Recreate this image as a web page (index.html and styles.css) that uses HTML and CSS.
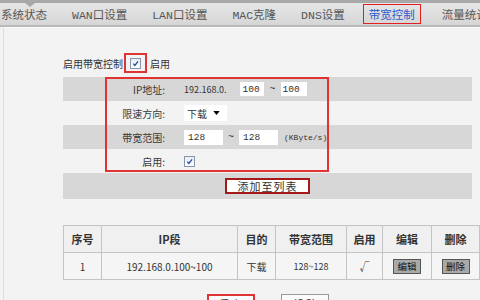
FILE: index.html
```html
<!DOCTYPE html>
<html lang="zh-CN">
<head>
    <meta charset="UTF-8">
    <title>带宽控制</title>
    <link rel="stylesheet" href="styles.css">
</head>
<body>
    <!-- Top Menu -->
    <div class="nav">
        <span class="nav-item first">系统状态</span>
        <span class="nav-item">WAN口设置</span>
        <span class="nav-item">LAN口设置</span>
        <span class="nav-item">MAC克隆</span>
        <span class="nav-item">DNS设置</span>
        <span class="nav-item active">带宽控制</span>
        <span class="nav-item">流量统计</span>
    </div>

    <div class="main">
        <!-- Enable switch -->
        <div class="enable-line">
            <span>启用带宽控制</span>
            <span class="mark-box"><span class="cb"><svg viewBox="0 0 10 10"><path d="M2.5 5.2 L4.3 7.2 L7.8 2.6" /></svg></span></span>
            <span>启用</span>
        </div>

        <!-- Rule form -->
        <div class="form">
            <div class="row gray">
                <span class="label">IP地址:</span>
                <span class="value">
                    <span class="ip-prefix">192.168.0.</span>
                    <input class="box ip-a" type="text" value="100">
                    <span class="tilde">~</span>
                    <input class="box ip-b" type="text" value="100">
                </span>
            </div>
            <div class="row">
                <span class="label">限速方向:</span>
                <span class="value">
                    <span class="select">下载<svg viewBox="0 0 8 5"><path d="M0 0 H8 L4 5 Z" /></svg></span>
                </span>
            </div>
            <div class="row gray">
                <span class="label">带宽范围:</span>
                <span class="value">
                    <input class="box bw" type="text" value="128">
                    <span class="tilde">~</span>
                    <input class="box bw" type="text" value="128">
                    <span class="unit">(KByte/s)</span>
                </span>
            </div>
            <div class="row">
                <span class="label">启用:</span>
                <span class="value">
                    <span class="cb"><svg viewBox="0 0 10 10"><path d="M2.5 5.2 L4.3 7.2 L7.8 2.6" /></svg></span>
                </span>
            </div>
            <div class="row gray add-row">
                <button class="add-btn">添加至列表</button>
            </div>
            <!-- highlight frame -->
            <div class="mark-frame"></div>
        </div>

        <!-- Rule list -->
        <table class="rules">
            <tr>
                <th class="c1">序号</th>
                <th class="c2">IP段</th>
                <th class="c3">目的</th>
                <th class="c4">带宽范围</th>
                <th class="c5">启用</th>
                <th class="c6">编辑</th>
                <th class="c7">删除</th>
            </tr>
            <tr>
                <td>1</td>
                <td>192.168.0.100~100</td>
                <td>下载</td>
                <td class="small">128~128</td>
                <td>√</td>
                <td><span class="mini-btn">编辑</span></td>
                <td><span class="mini-btn">删除</span></td>
            </tr>
        </table>

        <div class="actions">
            <button class="btn save">保 存</button>
            <button class="btn">帮 助</button>
        </div>
    </div>
</body>
</html>
```

FILE: styles.css
```css
/* General */
body {
    margin: 0;
    width: 480px;
    height: 300px;
    overflow: hidden;
    font-family: "Noto Sans CJK SC", sans-serif;
    font-size: 10px;
    color: #333;
    background: #f3f3f3;
}

/* Top Menu */
.nav {
    position: relative;
    display: flex;
    align-items: center;
    gap: 25px;
    height: 22px;
    border-top: 3px solid #a8a8a8;
    border-bottom: 2px solid #b9b9b9;
    background: linear-gradient(#e6e6e6, #d6d6d6);
    font-family: "Liberation Mono", "Noto Sans CJK SC", monospace;
    font-size: 11.5px;
    color: #555;
    white-space: nowrap;
}

.nav-item.first {
    margin-left: 1px;
}

.nav-item.first::before {
    content: "";
    position: absolute;
    top: 0;
    left: 25px;
    border-left: 5px solid transparent;
    border-right: 5px solid transparent;
    border-top: 4px solid #a8a8a8;
}

.nav-item.active {
    margin-left: -7px;
    margin-right: -4px;
    padding: 1px 5px;
    border: 1px solid #e02020;
    color: #2a5bd0;
}

/* Main panel */
.main {
    margin-left: 3px;
    border-left: 1px solid #dedede;
    border-top: 1px solid #fafafa;
    padding-left: 59px;
    padding-top: 25px;
    height: 247px;
    overflow: hidden;
}

.enable-line {
    display: flex;
    align-items: center;
    height: 20px;
    margin-bottom: 4px;
}

.mark-box {
    display: flex;
    align-items: center;
    justify-content: center;
    width: 19px;
    height: 16px;
    margin: 0 3px 0 1px;
    border: 2px solid #e03434;
}

/* Checkbox */
.cb {
    display: inline-block;
    width: 9px;
    height: 9px;
    border: 1px solid #8795ab;
    background: linear-gradient(#e9edf3, #fbfcfd);
}

.cb svg {
    display: block;
    width: 9px;
    height: 9px;
}

.cb path {
    fill: none;
    stroke: #2748a8;
    stroke-width: 1.4;
}

/* Form rows */
.form {
    position: relative;
    width: 409px;
}

.row {
    display: flex;
    align-items: center;
    height: 24px;
}

.row.gray {
    background: #d7d7d7;
}

.row .label {
    width: 102px;
    text-align: right;
    color: #3a3a3a;
}

.row .value {
    display: flex;
    align-items: center;
    margin-left: 19px;
}

.ip-prefix {
    font-size: 9px;
    margin-right: 14px;
}

.box {
    height: 14px;
    padding: 0 0 0 2px;
    border: none;
    background: #fff;
    font-family: "Liberation Mono", monospace;
    font-size: 9.5px;
    color: #333;
    box-sizing: border-box;
}

.ip-a {
    width: 24px;
}

.ip-b {
    width: 26px;
}

.bw {
    width: 39px;
    height: 15px;
    padding-left: 4px;
}

.tilde {
    margin: 0 5px;
    font-family: "Liberation Mono", monospace;
}

.unit {
    margin-left: 6px;
    font-family: "Liberation Mono", monospace;
    font-size: 8px;
}

.select {
    display: flex;
    align-items: center;
    gap: 6px;
    width: 43px;
    height: 16px;
    padding-left: 3px;
    background: #fff;
    box-sizing: border-box;
}

.select svg {
    width: 7px;
    height: 4px;
}

.add-row {
    justify-content: center;
    height: 26px;
}

.add-btn {
    width: 85px;
    height: 16px;
    padding: 0;
    border: 2px solid #a41a1a;
    background: #fff;
    font-family: "Noto Sans CJK SC", sans-serif;
    font-size: 11px;
    line-height: 12px;
    color: #333;
    letter-spacing: 1px;
}

.mark-frame {
    position: absolute;
    left: 42px;
    top: 0;
    width: 220px;
    height: 91px;
    border: 2px solid #e03434;
}

/* Rule list */
.rules {
    margin-top: 26px;
    width: 409px;
    border-collapse: collapse;
    table-layout: fixed;
    background: #f5f5f5;
}

.rules th,
.rules td {
    height: 26px;
    padding: 0;
    border: 1px solid #c4c4c4;
    text-align: center;
}

.rules th {
    background: #f0f0f0;
    font-size: 11px;
    font-weight: bold;
}

.rules td.small {
    font-size: 9px;
}

.c1 { width: 37px; }
.c2 { width: 135px; }
.c3 { width: 37px; }
.c4 { width: 70px; }
.c5 { width: 35px; }
.c6 { width: 48px; }
.c7 { width: 47px; }

.mini-btn {
    display: inline-block;
    width: 26px;
    height: 13px;
    line-height: 13px;
    border: 1px solid #555;
    background: #a9a9a9;
    color: #111;
    font-size: 9.5px;
}

/* Bottom buttons */
.actions {
    display: flex;
    justify-content: center;
    gap: 26px;
    width: 409px;
    margin-top: 14px;
}

.btn {
    width: 48px;
    height: 20px;
    padding: 0;
    border: 1px solid #9a9a9a;
    background: #fbfbfb;
    font-family: "Noto Sans CJK SC", sans-serif;
    font-size: 11px;
    color: #333;
}

.btn.save {
    border: 2px solid #e03434;
}
```
